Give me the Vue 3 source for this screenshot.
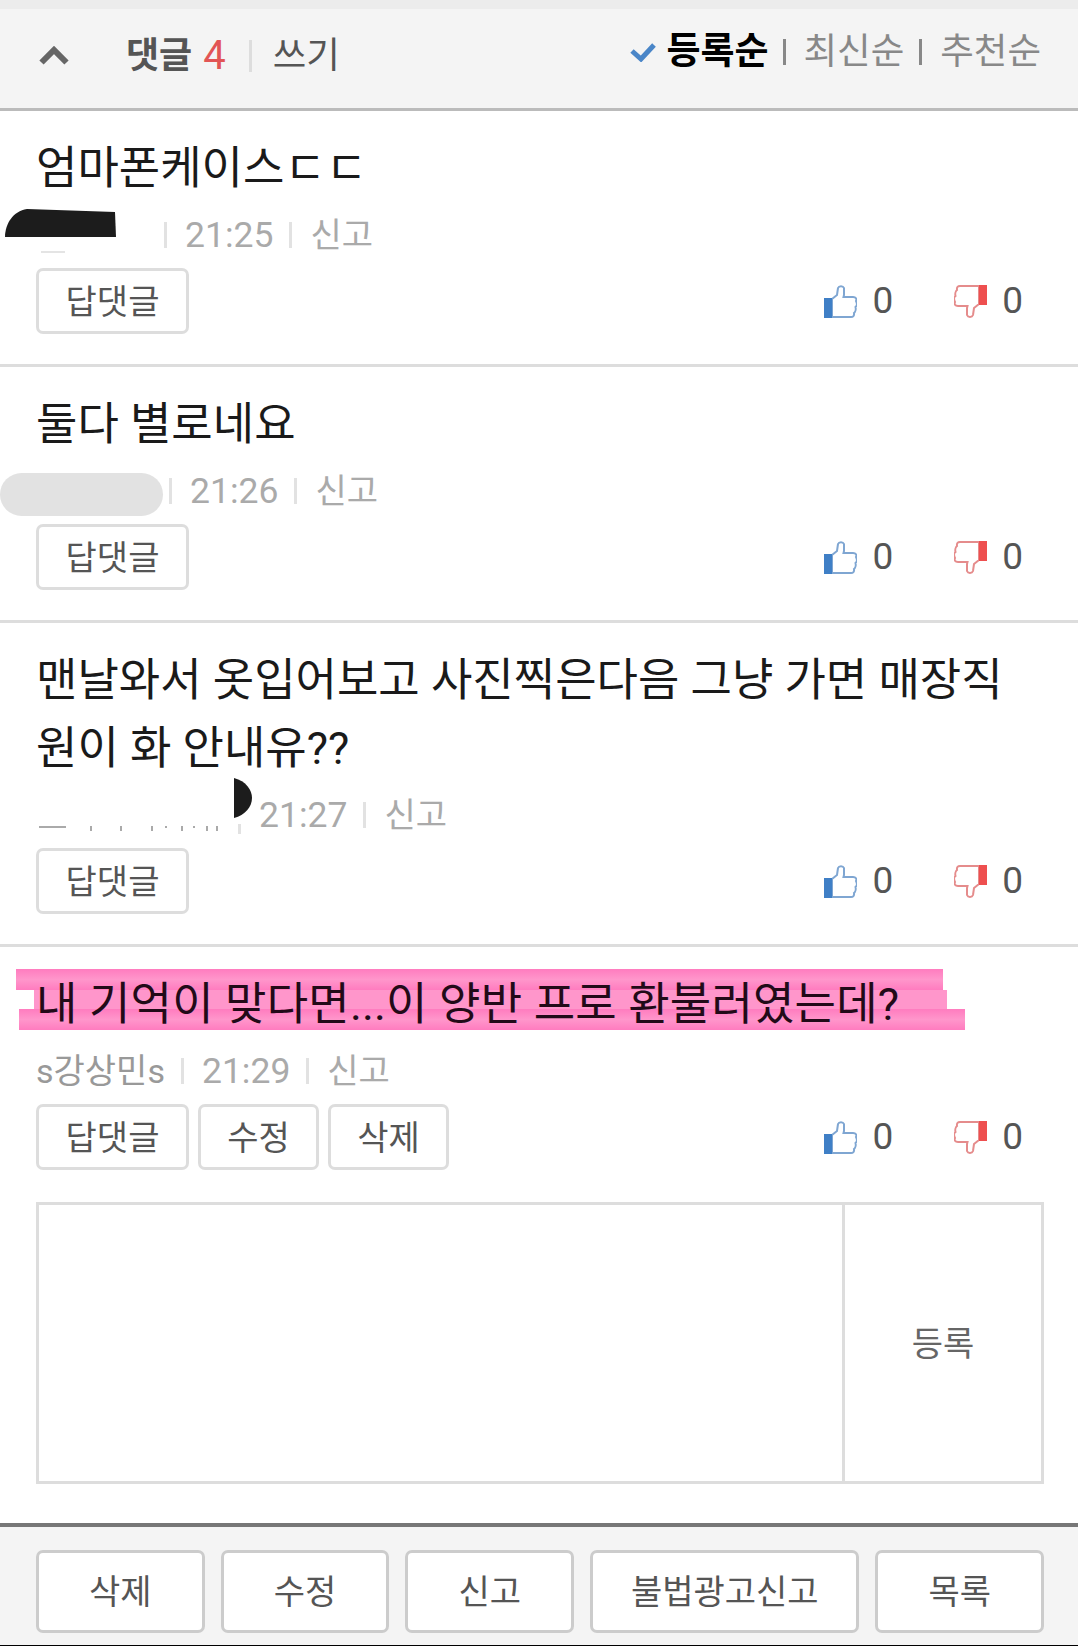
<script setup>
const comments = [
  { id: 1, text: '엄마폰케이스ㄷㄷ', time: '21:25', slot: 'slot-black' },
  { id: 2, text: '둘다 별로네요', time: '21:26', slot: 'slot-grey' },
  { id: 3, text: '맨날와서 옷입어보고 사진찍은다음 그냥 가면 매장직원이 화 안내유??', time: '21:27', slot: 'slot-moon' },
  { id: 4, text: '내 기억이 맞다면...이 양반 프로 환불러였는데?', time: '21:29', name: 's강상민s', mine: true }
]
const footerButtons = ['삭제', '수정', '신고', '불법광고신고', '목록']
</script>

<template>
  <div class="page">
    <header class="head">
      <div class="head-left">
        <svg class="chevron" viewBox="0 0 30 19" aria-hidden="true">
          <path d="M2.500 16.500 15 4l12.500 12.500" fill="none" stroke="#666" stroke-width="6" />
        </svg>
        <strong class="title">댓글</strong>
        <span class="count">4</span>
        <span class="head-sep"></span>
        <span class="write">쓰기</span>
      </div>
      <div class="sort">
        <svg class="check" viewBox="0 0 26 20" aria-hidden="true">
          <path d="M2 9l9 8L24 3" fill="none" stroke="#4a86c8" stroke-width="5" />
        </svg>
        <strong class="sort-on">등록순</strong>
        <span class="sort-sep"></span>
        <span class="sort-off">최신순</span>
        <span class="sort-sep sort-sep-b"></span>
        <span class="sort-off">추천순</span>
      </div>
    </header>

    <article v-for="c in comments" :key="c.id" class="comment" :class="{ mine: c.mine }">
      <svg v-if="c.mine" class="marker" viewBox="0 0 1078 70" aria-hidden="true">
        <defs>
          <linearGradient id="band" x1="0" y1="0" x2="0" y2="1">
            <stop offset="0" stop-color="#ff7cbf" />
            <stop offset="0.5" stop-color="#ff96cb" />
            <stop offset="1" stop-color="#ff7cbf" />
          </linearGradient>
        </defs>
        <rect x="16" y="0" width="927" height="21" fill="url(#band)" />
        <rect x="34" y="21" width="913" height="19" fill="#ff96cb" />
        <rect x="19" y="40" width="946" height="21" fill="url(#band)" />
      </svg>
      <p class="text">{{ c.text }}</p>
      <div class="meta">
        <span v-if="c.name" class="name">{{ c.name }}</span>
        <span v-else class="slot" :class="c.slot">
          <svg v-if="c.slot === 'slot-black'" class="blot-black" viewBox="0 0 111 30" aria-hidden="true">
            <path d="M0 29 C0 16 8 3 22 1 L110 4 L111 29Z" fill="#1c1c1c" />
          </svg>
          <span v-if="c.slot === 'slot-black'" class="dash"></span>
          <span v-if="c.slot === 'slot-grey'" class="blot-grey"></span>
          <svg v-if="c.slot === 'slot-moon'" class="moon" viewBox="0 0 18 40" aria-hidden="true">
            <path d="M0 0 C12 3 18 12 18 20 C18 29 11 37 0 40Z" fill="#1c1c1c" />
          </svg>
          <svg v-if="c.slot === 'slot-moon'" class="ticks" viewBox="0 0 183 6" aria-hidden="true">
            <path d="M3 2h27M55 1v5M85 1v5M116 1v5M130 1v2M146 1v5M158 1v2M171 1v5M181 1v5" stroke="#aaa" stroke-width="2" fill="none" />
          </svg>
        </span>
        <span class="sep" :class="{ 'sep-cut': c.slot === 'slot-moon' }"></span>
        <span class="time">{{ c.time }}</span>
        <span class="sep sep-last"></span>
        <span class="report">신고</span>
      </div>
      <div class="actions">
        <button class="btn" type="button">답댓글</button>
        <template v-if="c.mine">
          <button class="btn btn-short" type="button">수정</button>
          <button class="btn btn-short" type="button">삭제</button>
        </template>
        <div class="votes">
          <svg class="thumb" viewBox="0 0 33 33" aria-hidden="true">
            <path d="M8 14 13 10 14 3C15 .5 19 .5 20 3V10L19.500 12H29C32 12 33 14 32 16 33 18 33 21 31.500 22 32 24 31.500 27 30 28 30.500 31 29 32 27 32H8Z" fill="#fff" stroke="#7fa6d2" stroke-width="2" />
            <rect x="0" y="13" width="8" height="20" fill="#3f7fc6" />
          </svg>
          <span class="vote-n">0</span>
          <svg class="thumb thumb-down" viewBox="0 0 33 33" aria-hidden="true">
            <path d="M8 14 13 10 14 3C15 .5 19 .5 20 3V10L19.500 12H29C32 12 33 14 32 16 33 18 33 21 31.500 22 32 24 31.500 27 30 28 30.500 31 29 32 27 32H8Z" fill="#fff" stroke="#e58c8c" stroke-width="2" />
            <rect x="0" y="13" width="8" height="20" fill="#ee4f4f" />
          </svg>
          <span class="vote-n">0</span>
        </div>
      </div>
      <div v-if="c.mine" class="editor">
        <div class="editor-input"></div>
        <div class="editor-submit">등록</div>
      </div>
    </article>

    <footer class="foot">
      <button v-for="(label, i) in footerButtons" :key="label" class="foot-btn" :class="{ wide: i === 3 }" type="button">{{ label }}</button>
    </footer>
  </div>
</template>

<style>
html, body { margin: 0; background: #fff; }
</style>

<style scoped>
.page {
  width: 1078px;
  height: 1646px;
  overflow: hidden;
  box-sizing: border-box;
  background: #fff;
  font-family: Roboto, "Noto Sans CJK KR", sans-serif;
  display: flex;
  flex-direction: column;
}
.head {
  height: 111px;
  box-sizing: border-box;
  background: #f4f4f4;
  border-top: 9px solid #ececec;
  border-bottom: 3px solid #bbb;
  display: flex;
  justify-content: space-between;
  padding: 0 37px 0 39px;
  flex: none;
}
.head-left { display: flex; align-items: center; height: 94px; font-size: 36px; }
.chevron { width: 30px; height: 19px; margin: -2px 57px 0 0; }
.title { color: #555; font-weight: 700; line-height: 44px; }
.count { color: #e25555; font-size: 40px; margin-left: 11px; line-height: 44px; }
.head-sep { width: 3px; height: 32px; background: #ddd; margin: 0 21px 0 23px; }
.write { color: #555; font-size: 36.500px; line-height: 44px; }
.sort { display: flex; align-items: center; height: 86px; font-size: 36.500px; }
.check { width: 26px; height: 20px; margin-right: 10px; }
.sort-on { color: #000; font-size: 37px; font-weight: 700; line-height: 44px; margin-right: -2px; }
.sort-off { color: #888; line-height: 44px; }
.sort-sep { width: 3px; height: 26px; background: #888; margin: 0 18px 0 16px; }
.sort-sep-b { margin-left: 15px; }

.comment {
  position: relative;
  padding: 24px 34px 30px 36px;
  border-bottom: 3px solid #ddd;
  flex: none;
}
.comment.mine { border-bottom: 0; padding-bottom: 0; }
.marker { position: absolute; left: 0; top: 22px; width: 1078px; height: 70px; }
.text {
  position: relative;
  margin: 0;
  padding-right: 20px;
  font-size: 45px;
  line-height: 68px;
  color: #1a1a1a;
  word-break: break-all;
}
.mine .text { color: #220a18; letter-spacing: 0.2px; }
.meta {
  display: flex;
  align-items: center;
  height: 44px;
  margin-top: 10px;
  font-size: 35px;
  line-height: 44px;
  color: #aaa;
}
.name { color: #999; font-size: 34px; }
.time { font-size: 35.500px; }
.report { font-size: 34px; }
.slot { position: relative; display: block; height: 44px; }
.slot-black { width: 112px; }
.slot-grey { width: 117px; }
.slot-moon { width: 186px; }
.blot-black { position: absolute; left: -31px; top: -5px; width: 111px; height: 30px; }
.dash { position: absolute; left: 5px; top: 38px; width: 24px; height: 2px; background: #e4e4e4; }
.blot-grey {
  position: absolute;
  left: -36px;
  top: 4px;
  width: 163px;
  height: 43px;
  border-radius: 22px;
  background: #e2e2e2;
}
.moon { position: absolute; left: 198px; top: -15px; width: 18px; height: 40px; }
.ticks { position: absolute; left: 0; top: 32px; width: 183px; height: 6px; }
.sep { width: 3px; height: 26px; background: #e2e2e2; margin: 0 18px 0 16px; flex: none; }
.sep-last { margin-right: 18px; }
.sep-cut { height: 10px; align-self: flex-end; margin-bottom: 3px; }
.actions { display: flex; align-items: center; gap: 9px; margin-top: 11px; }
.btn {
  width: 153px;
  height: 66px;
  box-sizing: border-box;
  padding: 0 0 3px;
  background: #fff;
  border: 3px solid #ddd;
  border-radius: 7px;
  font: inherit;
  font-size: 34px;
  color: #555;
}
.btn-short { width: 121px; }
.votes { margin-left: auto; display: flex; align-items: center; padding-right: 21px; }
.thumb { width: 33px; height: 33px; }
.thumb-down { transform: rotate(180deg); margin-left: 61px; }
.vote-n { font-size: 37px; color: #555; margin-left: 15px; line-height: 44px; }
.editor {
  display: flex;
  height: 282px;
  box-sizing: border-box;
  margin: 32px 0 0;
  border: 3px solid #ddd;
}
.editor-input { flex: 1; border-right: 3px solid #ddd; }
.editor-submit {
  width: 196px;
  box-sizing: border-box;
  padding-bottom: 4px;
  display: flex;
  align-items: center;
  justify-content: center;
  font-size: 34px;
  color: #666;
}
.foot {
  margin-top: 39px;
  flex: 1;
  box-sizing: border-box;
  background: #f4f4f4;
  border-top: 4px solid #777;
  border-bottom: 1px solid #000;
  padding: 23px 34px 11px 36px;
  display: flex;
  gap: 16px;
}
.foot-btn {
  flex: 167 1 0;
  box-sizing: border-box;
  height: 83px;
  padding: 0 0 4px;
  background: #fff;
  border: 3px solid #ccc;
  border-radius: 7px;
  font: inherit;
  font-size: 34px;
  color: #555;
}
.foot-btn.wide { flex: 270 1 0; }
</style>
